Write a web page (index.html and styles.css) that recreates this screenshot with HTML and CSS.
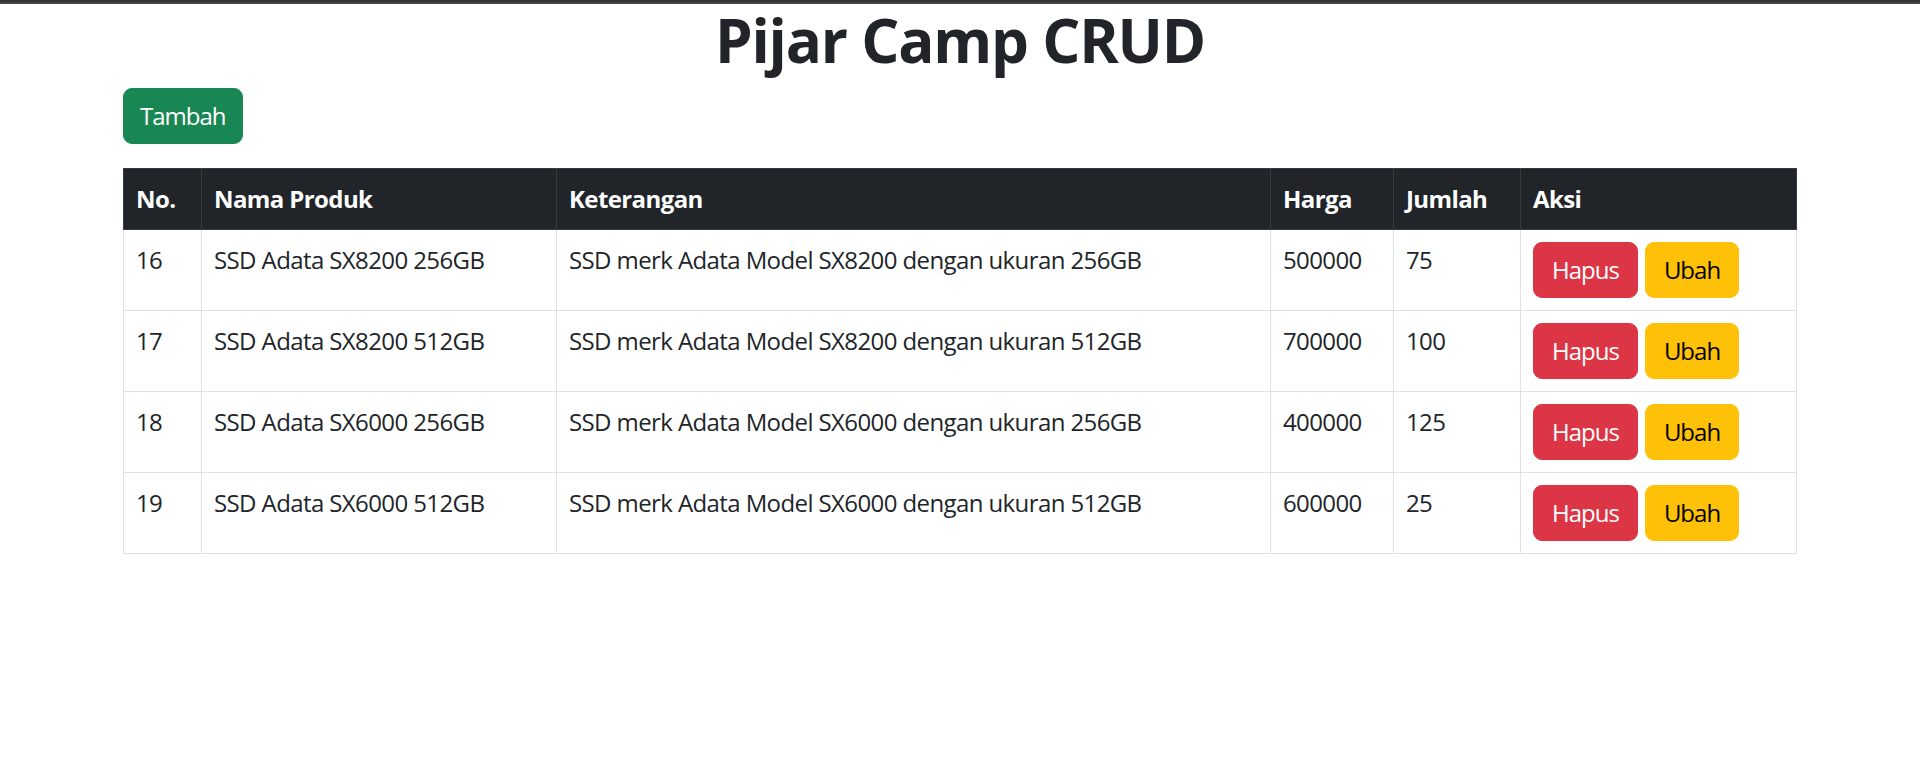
FILE: index.html
```html
<!DOCTYPE html>
<html lang="id">
<head>
<meta charset="utf-8">
<title>Pijar Camp CRUD</title>
<link rel="stylesheet" href="styles.css">
</head>
<body>
<div class="topbar"></div>
<div class="container">
  <h1 class="title">Pijar Camp CRUD</h1>
  <button class="btn btn-success btn-add">Tambah</button>
  <table class="table">
    <colgroup>
      <col class="c-no"><col class="c-nama"><col class="c-ket"><col class="c-harga"><col class="c-jml"><col class="c-aksi">
    </colgroup>
    <thead>
      <tr><th>No.</th><th>Nama Produk</th><th>Keterangan</th><th>Harga</th><th>Jumlah</th><th>Aksi</th></tr>
    </thead>
    <tbody>
      <tr><td>16</td><td>SSD Adata SX8200 256GB</td><td>SSD merk Adata Model SX8200 dengan ukuran 256GB</td><td>500000</td><td>75</td><td><div class="actions"><button class="btn btn-danger">Hapus</button><button class="btn btn-warning">Ubah</button></div></td></tr>
      <tr><td>17</td><td>SSD Adata SX8200 512GB</td><td>SSD merk Adata Model SX8200 dengan ukuran 512GB</td><td>700000</td><td>100</td><td><div class="actions"><button class="btn btn-danger">Hapus</button><button class="btn btn-warning">Ubah</button></div></td></tr>
      <tr><td>18</td><td>SSD Adata SX6000 256GB</td><td>SSD merk Adata Model SX6000 dengan ukuran 256GB</td><td>400000</td><td>125</td><td><div class="actions"><button class="btn btn-danger">Hapus</button><button class="btn btn-warning">Ubah</button></div></td></tr>
      <tr><td>19</td><td>SSD Adata SX6000 512GB</td><td>SSD merk Adata Model SX6000 dengan ukuran 512GB</td><td>600000</td><td>25</td><td><div class="actions"><button class="btn btn-danger">Hapus</button><button class="btn btn-warning">Ubah</button></div></td></tr>
    </tbody>
  </table>
</div>
</body>
</html>
```

FILE: styles.css
```css
* { box-sizing: border-box; }
html, body { margin: 0; padding: 0; }
body {
  font-family: "Open Sans", "Noto Sans", sans-serif;
  font-size: 24px;
  line-height: 1.5;
  color: #212529;
  background: #fff;
}
.topbar {
  height: 4px;
  background: linear-gradient(#2e2e2e, #4a4a4a);
}
.container {
  max-width: 1710px;
  margin: 0 auto;
  padding: 0 18px;
}
.title {
  margin: 0 0 12px;
  font-size: 60px;
  line-height: 72px;
  font-weight: 700;
  text-align: center;
  letter-spacing: -1.2px;
}
.btn {
  display: inline-block;
  font-family: inherit;
  font-size: 24px;
  line-height: 36px;
  padding: 9px 18px;
  border: 1.5px solid transparent;
  border-radius: 9px;
  letter-spacing: -1px;
  cursor: pointer;
}
.btn-success { background: #198754; border-color: #198754; color: #fff; }
.btn-danger { background: #dc3545; border-color: #dc3545; color: #fff; }
.btn-warning { background: #ffc107; border-color: #ffc107; color: #000; }
.btn-add { margin-bottom: 24px; padding: 9px 16px; }
.table {
  width: 100%;
  table-layout: fixed;
  border-collapse: collapse;
  margin-bottom: 24px;
}
.c-no { width: 78px; }
.c-nama { width: 355px; }
.c-ket { width: 714px; }
.c-harga { width: 123px; }
.c-jml { width: 127px; }
.c-aksi { width: 276px; }
.table th, .table td {
  padding: 12px;
  text-align: left;
  vertical-align: top;
  border: 1px solid #dee2e6;
  letter-spacing: -0.6px;
}
.table th {
  background: #212529;
  color: #fff;
  font-weight: 700;
  border-color: #373b3e;
}
.actions {
  display: flex;
  gap: 7px;
}
```
